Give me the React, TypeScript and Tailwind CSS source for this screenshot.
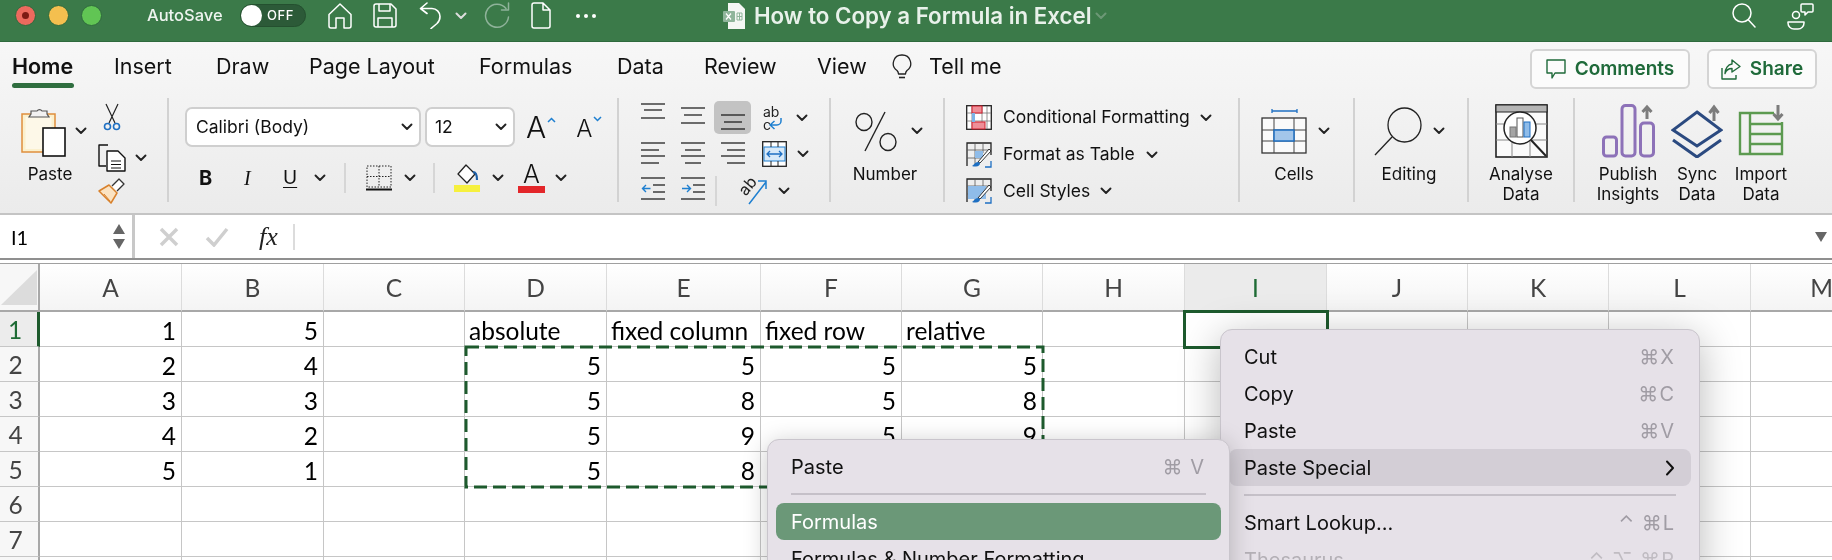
import type { ReactNode } from "react";

const ui = "font-['Inter','Liberation_Sans',sans-serif]";
const sheetFont = "font-['Lato','Liberation_Sans',sans-serif]";

function Chev({ className = "" }: { className?: string }) {
  return (
    <svg width="12" height="8" viewBox="0 0 12 8" fill="none" className={className}>
      <path d="M1.500 1.500 6 6l4.500-4.500" stroke="#222" strokeWidth="1.900" strokeLinecap="round" strokeLinejoin="round" />
    </svg>
  );
}

function HomeIcon() {
  return (
    <svg width="24" height="26" viewBox="0 0 24 26" fill="none" stroke="#fff" strokeWidth="1.500" strokeLinejoin="round">
      <path d="M1 11.500 12 1l11 10.500V23a2 2 0 0 1-2 2h-5V15H8v10H3a2 2 0 0 1-2-2z" />
    </svg>
  );
}

function SaveIcon() {
  return (
    <svg width="24" height="25" viewBox="0 0 24 25" fill="none" stroke="#fff" strokeWidth="1.500" strokeLinejoin="round">
      <path d="M3 1h15l5 5v16a2 2 0 0 1-2 2H3a2 2 0 0 1-2-2V3a2 2 0 0 1 2-2z" />
      <path d="M6 1v7h11V1M5 24v-9h14v9" />
    </svg>
  );
}

function UndoIcon() {
  return (
    <svg width="23" height="27" viewBox="0 0 23 27" fill="none" stroke="#fff" strokeWidth="1.600" strokeLinecap="round" strokeLinejoin="round">
      <path d="M8 1 1.500 6.500 8 11.500M1.500 6.500H13a8 8 0 0 1 8 8c0 3-1 5-3 7l-6 5" />
    </svg>
  );
}

function RedoIcon() {
  return (
    <svg width="26" height="27" viewBox="0 0 26 27" fill="none" stroke="#8fb39a" strokeWidth="1.500" strokeLinecap="round" strokeLinejoin="round">
      <path d="M22 6.500A11.500 11.500 0 1 0 24.500 15M24.500 1v7h-7" />
    </svg>
  );
}

function DocIcon() {
  return (
    <svg width="20" height="27" viewBox="0 0 20 27" fill="none" stroke="#fff" strokeWidth="1.500" strokeLinejoin="round">
      <path d="M3 1h9l7 7v16a2 2 0 0 1-2 2H3a2 2 0 0 1-2-2V3a2 2 0 0 1 2-2zM12 1v7h7" />
    </svg>
  );
}

function ExcelDoc() {
  return (
    <svg width="22" height="26" viewBox="0 0 22 26">
      <path d="M5 0h11l6 6v20H5z" fill="#f4f7f4" />
      <rect x="0" y="8" width="12" height="11" rx="1" fill="#8fb59b" />
      <path d="m3 10.500 5 6M8 10.500l-5 6" stroke="#fff" strokeWidth="1.200" />
      <path d="M14 10h5v7h-5zM14 13.500h5M16.500 10v7" stroke="#8fb59b" fill="none" />
    </svg>
  );
}

function SearchIcon() {
  return (
    <svg width="24" height="25" viewBox="0 0 24 25" fill="none" stroke="#fff" strokeWidth="1.500" strokeLinecap="round">
      <circle cx="10" cy="10" r="9" />
      <path d="m16.500 17 6.500 7" />
    </svg>
  );
}

function PeopleIcon() {
  return (
    <svg width="27" height="28" viewBox="0 0 27 28" fill="none" stroke="#fff" strokeWidth="1.500" strokeLinejoin="round">
      <circle cx="9" cy="13" r="3.500" />
      <path d="M1 20h16v1a6 6 0 0 1-6 6H7a6 6 0 0 1-6-6z" />
      <path d="M15 2h10a1 1 0 0 1 1 1v6a1 1 0 0 1-1 1h-4l-3 3v-3h-3a1 1 0 0 1-1-1V3a1 1 0 0 1 1-1z" />
    </svg>
  );
}

function Bulb() {
  return (
    <svg width="20" height="25" viewBox="0 0 20 25" fill="none" stroke="#222" strokeWidth="1.300" strokeLinejoin="round">
      <path d="M10 1a8.500 8.500 0 0 0-5 15.500c1 1 1.500 2 1.500 3.500h7c0-1.500.5-2.500 1.500-3.500A8.500 8.500 0 0 0 10 1z" />
      <path d="M7 23.500h6" strokeWidth="1.600" />
    </svg>
  );
}

function PasteIcon() {
  return (
    <svg width="45" height="51" viewBox="0 0 45 51" fill="none">
      <rect x="1" y="8" width="33" height="38" fill="#fbf0cd" stroke="#df8f3c" strokeWidth="1.500" />
      <rect x="4.500" y="11" width="26" height="32" fill="#fdf8e8" />
      <path d="M10 8V5h6a3 3 0 0 1 5 0h5v3l2 3H8z" fill="#f2f2f2" stroke="#555" strokeWidth="1.200" />
      <rect x="22" y="22" width="22" height="28" fill="#fff" stroke="#111" strokeWidth="1.600" />
    </svg>
  );
}

function ScissorsIcon() {
  return (
    <svg width="18" height="28" viewBox="0 0 18 28" fill="none">
      <path d="M3 1 12 20M15 1 6 20" stroke="#222" strokeWidth="1.200" />
      <circle cx="4.500" cy="23.500" r="3" stroke="#1e6fc2" strokeWidth="1.600" />
      <circle cx="13.500" cy="23.500" r="3" stroke="#1e6fc2" strokeWidth="1.600" />
    </svg>
  );
}

function CopyIcon() {
  return (
    <svg width="28" height="28" viewBox="0 0 28 28" fill="none" stroke="#111" strokeWidth="1.400" strokeLinejoin="round">
      <path d="M10 1H1v21h7" />
      <path d="M9 7h11l7 7v13H9z" fill="#fff" />
      <path d="M13 17h10M13 20.500h10M13 24h10" strokeWidth="1.100" />
    </svg>
  );
}

function BrushIcon() {
  return (
    <svg width="27" height="26" viewBox="0 0 27 26" fill="none">
      <path d="m11 7 8 8-6 10L1 13z" fill="#fbe3c2" stroke="#d8812c" strokeWidth="1.500" strokeLinejoin="round" />
      <path d="m14 8 4-4 3-3 5 5-3 3-4 4" fill="#fff" stroke="#333" strokeWidth="1.300" strokeLinejoin="round" />
      <path d="m6 16 6 7" stroke="#d8812c" />
    </svg>
  );
}

function BorderIcon() {
  return (
    <svg width="26" height="26" viewBox="0 0 26 26" fill="none">
      <path d="M1 1h24v21H1zM13 1v21M1 11.500h24" stroke="#222" strokeDasharray="1.500 1.500" />
      <path d="M0 24.500h26" stroke="#111" strokeWidth="2" />
    </svg>
  );
}

function FillIcon() {
  return (
    <svg width="26" height="28" viewBox="0 0 26 28" fill="none">
      <path d="m12 1 9 9-8 9-9-9z" fill="#fff" stroke="#222" strokeWidth="1.300" strokeLinejoin="round" />
      <path d="M19 8c3 0 4 3 4 8" stroke="#1c5fa8" strokeWidth="2.200" />
      <rect x="0" y="21" width="26" height="7" fill="#f6f03e" />
    </svg>
  );
}

function FontColorIcon() {
  return (
    <div className="flex flex-col items-center w-[27px]">
      <span className="text-[25px] font-light leading-[21px] text-[#111]">A</span>
      <span className="block w-[27px] h-[7px] mt-[1px] bg-[#e3262a]" />
    </div>
  );
}

function Lines({ rows, arrow }: { rows: number[][]; arrow?: "in" | "out" }) {
  return (
    <svg width="24" height="37" viewBox="0 0 24 37" fill="none">
      {rows.map(([x1, x2, y]) => (
        <path key={`${x1}-${y}`} d={`M${x1} ${y}H${x2}`} stroke="#111" strokeWidth="1.200" />
      ))}
      {arrow === "in" && <path d="M1 16.500h8M6 13l3.500 3.500L6 20" stroke="#1e7fd0" strokeWidth="1.400" />}
      {arrow === "out" && <path d="M1.500 16.500h8M5 13l-3.500 3.500L5 20" stroke="#1e7fd0" strokeWidth="1.400" />}
    </svg>
  );
}

function WrapIcon() {
  return (
    <div className="flex w-[24px] h-[26px] text-[14px] leading-[13px] text-[#222]">
      <div className="flex flex-col">
        <span>ab</span>
        <span>c</span>
      </div>
      <svg width="14" height="14" viewBox="0 0 14 14" fill="none" className="-ml-[10px] mt-[12px]">
        <path d="M12 1v3a4 4 0 0 1-4 4H2m3.500-4L1 8l4.500 4" stroke="#1e7fd0" strokeWidth="1.500" />
      </svg>
    </div>
  );
}

function MergeIcon() {
  return (
    <svg width="25" height="26" viewBox="0 0 25 26" fill="none">
      <rect x=".7" y=".7" width="23.600" height="24.600" fill="#fff" stroke="#222" strokeWidth="1.300" />
      <rect x="2" y="6" width="21" height="14" fill="#d8e9f8" stroke="#1e7fd0" />
      <path d="M5 13h15M8 10l-3 3 3 3M17 10l3 3-3 3" stroke="#1e6fc2" strokeWidth="1.300" />
      <path d="M9 1v5M16 1v5M9 20v5M16 20v5" stroke="#222" />
    </svg>
  );
}

function OrientIcon() {
  return (
    <div className="flex w-[30px] h-[28px]">
      <span className="text-[16px] leading-[16px] text-[#222] rotate-[-50deg] w-[18px] h-[16px] mt-[1px]">ab</span>
      <svg width="20" height="28" viewBox="0 0 20 28" fill="none" className="-ml-[8px]">
        <path d="M1 27 18 5M10 4h8v8" stroke="#1e7fd0" strokeWidth="1.500" />
      </svg>
    </div>
  );
}

function PercentIcon() {
  return (
    <svg width="43" height="41" viewBox="0 0 43 41" fill="none" stroke="#222" strokeWidth="1.400">
      <ellipse cx="9" cy="11" rx="8" ry="8.500" />
      <ellipse cx="33" cy="31" rx="8" ry="8.500" />
      <path d="M30 1 10 40" />
    </svg>
  );
}

function CondIcon() {
  return (
    <svg width="26" height="25" viewBox="0 0 26 25" fill="none">
      <rect x=".7" y=".7" width="24.600" height="23.600" fill="#fff" stroke="#222" strokeWidth="1.300" />
      <path d="M6 1v23M16 1v23M21 1v23M1 8h24M1 16h24" stroke="#777" strokeWidth=".8" />
      <rect x="6" y="1" width="10" height="7" fill="#ee8f98" stroke="#d11f2c" />
      <rect x="6" y="17" width="13" height="7" fill="#ee8f98" stroke="#d11f2c" />
      <path d="M6 8h3v9H6z" fill="#7cb4e8" />
    </svg>
  );
}

function TableIcon({ fill = false }: { fill?: boolean }) {
  return (
    <svg width="26" height="26" viewBox="0 0 26 26" fill="none">
      <path d="M1 24V1h24v12" stroke="#222" strokeWidth="1.300" />
      <path d="M1 8h24M1 16h14M9 1v22M17 1v10" stroke="#555" strokeWidth=".8" />
      {fill ? <rect x="2" y="8" width="18" height="13" fill="#8fbce9" /> : <rect x="9" y="9" width="8" height="7" fill="#8fbce9" />}
      <path d="m12 20 11-13 2 2-11 12z" fill="#fff" stroke="#333" />
      <path d="M12 20c-3 0-4 3-6 4 3 1 8 1 8-3z" fill="#1e6fc2" />
      <path d="M19 25h6v-6" stroke="#1e6fc2" strokeWidth="1.300" />
    </svg>
  );
}

function CellsIcon() {
  return (
    <svg width="46" height="46" viewBox="0 0 46 46" fill="none">
      <path d="M11 3h25M11 1v4M36 1v4" stroke="#1e6fc2" strokeWidth="1.300" />
      <rect x="1" y="10" width="44" height="35" fill="#fafafa" stroke="#333" strokeWidth="1.300" />
      <path d="M13 10v35M33 10v35M1 22h44M1 33h44" stroke="#444" strokeWidth="1" />
      <rect x="13" y="22" width="20" height="11" fill="#a3c6ea" stroke="#1e6fc2" strokeWidth="1.500" />
    </svg>
  );
}

function LensIcon() {
  return (
    <svg width="48" height="49" viewBox="0 0 48 49" fill="none" stroke="#222" strokeWidth="1.300">
      <ellipse cx="30.500" cy="18" rx="16.500" ry="17" />
      <path d="M18 30 1 48" />
    </svg>
  );
}

function AnalyseIcon() {
  return (
    <svg width="53" height="54" viewBox="0 0 53 54" fill="none">
      <rect x="1" y="1" width="51" height="52" fill="#fafafa" stroke="#222" strokeWidth="1.600" />
      <rect x="1" y="1" width="51" height="7" fill="#b5b5b5" stroke="#222" />
      <path d="M1 20h51M1 36h51M17 36v17M35 36v17" stroke="#888" />
      <circle cx="25" cy="24" r="16" fill="#fff" stroke="#222" strokeWidth="1.500" />
      <rect x="15" y="23" width="6" height="10" fill="#a5a5a5" stroke="#777" />
      <rect x="22" y="14" width="6" height="19" fill="#fff" stroke="#555" />
      <rect x="29" y="18" width="6" height="15" fill="#8fbce9" stroke="#1e6fc2" />
      <path d="m36 36 15 16" stroke="#222" strokeWidth="2" />
    </svg>
  );
}

function PublishIcon() {
  return (
    <svg width="53" height="54" viewBox="0 0 53 54" fill="none" stroke="#8d72b8" strokeWidth="3">
      <rect x="1.500" y="33" width="13" height="19" rx="3" />
      <rect x="20" y="1.500" width="13" height="50.500" rx="3.500" />
      <rect x="38.500" y="19" width="13" height="33" rx="3.500" />
      <path d="M45 15V3m-4.500 5L45 3l4.500 5" stroke="#7c7c7c" />
    </svg>
  );
}

function SyncIcon() {
  return (
    <svg width="52" height="54" viewBox="0 0 52 54" fill="none" stroke="#2b4a80" strokeWidth="3">
      <path d="M26 8 50 26 26 42 2 26z" />
      <path d="m2 36 24 17 24-17" />
      <path d="M43 17V3m-4.500 6L43 3l4.500 6" stroke="#7c7c7c" />
    </svg>
  );
}

function ImportIcon() {
  return (
    <svg width="46" height="54" viewBox="0 0 46 54" fill="none" stroke="#5c9a50" strokeWidth="2.400">
      <path d="M36 9H2v41h42V18" />
      <path d="M12 9v41M12 20h32M12 30h32M12 40h32" />
      <path d="M40 1v14m-4.500-5 4.500 5 4.500-5" stroke="#7c7c7c" strokeWidth="3" />
    </svg>
  );
}

function Label({ children, width }: { children: ReactNode; width: string }) {
  return <div className={`${width} text-center text-[17px] leading-[20px] text-[#111] whitespace-nowrap`}>{children}</div>;
}

const tabs = [
  { name: "Home", w: "w-[60px]", active: true },
  { name: "Insert", w: "w-[60px]" },
  { name: "Draw", w: "w-[51px]" },
  { name: "Page Layout", w: "w-[128px]" },
  { name: "Formulas", w: "w-[96px]" },
  { name: "Data", w: "w-[45px]" },
  { name: "Review", w: "w-[71px]" },
  { name: "View", w: "w-[38px]" },
];

const cols = ["A", "B", "C", "D", "E", "F", "G", "H", "I", "J", "K", "L", "M"];

const rows: Record<string, string[]> = {
  A: ["1", "2", "3", "4", "5"],
  B: ["5", "4", "3", "2", "1"],
  D: ["absolute", "5", "5", "5", "5"],
  E: ["fixed column", "5", "8", "9", "8"],
  F: ["fixed row", "5", "5", "5"],
  G: ["relative", "5", "8", "9"],
};

function Sheet() {
  return (
    <div className={`relative flex-1 ${sheetFont}`}>
      <div className="grid grid-cols-[40px_142px_142px_141px_142px_154px_141px_141px_142px_142px_141px_141px_142px_142px] grid-rows-[48px_repeat(8,35px)]">
        <div className="flex items-end justify-start pl-[1px] pb-[5px] bg-[#f7f7f7] border-r-2 border-b-2 border-r-[#a8a8a8] border-b-[#a8a8a8]">
          <svg width="36" height="35" viewBox="0 0 36 35">
            <path d="M36 0v35H0z" fill="#dcdcdc" />
          </svg>
        </div>
        {cols.map((c) => (
          <div
            key={c}
            className={`flex items-center justify-center pt-[2px] text-[24.500px] border-b-2 border-b-[#a8a8a8] border-r border-r-[#dcdcdc] ${
              c === "I" ? "bg-[#ebebeb] text-[#1e6b35]" : "bg-gradient-to-b from-white to-[#f4f4f4] text-[#444]"
            }`}
          >
            {c}
          </div>
        ))}
        {[1, 2, 3, 4, 5, 6, 7, 8].map((n) => (
          <Row key={n} n={n} />
        ))}
      </div>
      <svg width="581" height="144" viewBox="0 0 581 144" fill="none" className="absolute left-[464px] top-[81px]">
        <rect x="2" y="2" width="577" height="140" stroke="#1d5a2d" strokeWidth="3" strokeDasharray="13 6" />
      </svg>
      <div className="absolute left-[1183px] top-[46px] w-[146px] h-[39px] border-[3px] border-[#1d5a2d]" />
    </div>
  );
}

function Row({ n }: { n: number }) {
  return (
    <>
      <div
        className={`flex items-center justify-center pr-[7px] pt-[3px] text-[24.500px] border-b border-b-[#c6c6c6] ${
          n === 1 ? "bg-[#ececec] text-[#1e6b35] border-r-[3px] border-r-[#1d5a2d]" : "bg-[#f7f7f7] text-[#444] border-r-2 border-r-[#a8a8a8]"
        }`}
      >
        {n < 8 ? n : ""}
      </div>
      {cols.map((c) => {
        const value = rows[c]?.[n - 1] ?? "";
        const isNumber = /^\d+$/.test(value);
        return (
          <div
            key={c}
            className={`flex items-center pt-[5px] text-[24.500px] leading-none text-black whitespace-nowrap border-b border-r border-[#c6c6c6] ${
              isNumber ? "justify-end pr-[5px]" : "justify-start pl-[4px]"
            }`}
          >
            {value}
          </div>
        );
      })}
    </>
  );
}

function MenuItem({ label, keys, active, disabled, green }: { label: string; keys?: string; active?: boolean; disabled?: boolean; green?: boolean }) {
  const bg = active ? "bg-[#d3ced6]" : green ? "bg-[#6b9878]" : "";
  const color = disabled ? "text-[#b4b0b6]" : green ? "text-white" : "text-[#111]";
  return (
    <div className={`flex items-center justify-between h-[37px] mx-[8px] pl-[15px] pr-[16px] rounded-[8px] whitespace-nowrap ${bg}`}>
      <span className={`text-[20px] ${color}`}>{label}</span>
      {keys && <span className={`text-[20px] tracking-[1px] ${disabled ? "text-[#c0bcc2]" : "text-[#a09ca4]"}`}>{keys}</span>}
      {active && (
        <svg width="10" height="16" viewBox="0 0 10 16" fill="none">
          <path d="m2 1.500 6 6.500-6 6.500" stroke="#111" strokeWidth="2" strokeLinecap="round" strokeLinejoin="round" />
        </svg>
      )}
    </div>
  );
}

function MenuRule() {
  return (
    <div className="h-[18px] flex items-center mx-[23px]">
      <div className="w-full h-[1.500px] bg-[#c5c0c8]" />
    </div>
  );
}

export default function App() {
  return (
    <div className={`relative w-[1832px] h-[560px] overflow-hidden flex flex-col bg-white blur-[0.4px] ${ui}`}>
      <header className="h-[42px] shrink-0 bg-[#3b7a49] border-b border-[#2f6a3d]">
        <div className="flex items-center h-[31px] pl-[15px] text-white">
          <span className="flex items-center justify-center w-[21px] h-[21px] rounded-full bg-[#ec6a5e] border border-[#2f6a3d]">
            <span className="w-[7px] h-[7px] rounded-full bg-[#7d1a14]" />
          </span>
          <span className="w-[21px] h-[21px] ml-[12px] rounded-full bg-[#f4bf4f] border border-[#2f6a3d]" />
          <span className="w-[21px] h-[21px] ml-[12px] rounded-full bg-[#61c554] border border-[#2f6a3d]" />
          <span className="w-[83px] ml-[45px] text-[16.500px] font-medium whitespace-nowrap text-[#eef4ef]">AutoSave</span>
          <div className="flex items-center w-[66px] h-[23px] ml-[10px] rounded-full bg-[#2c5a38] border border-[#24502f]">
            <span className="w-[21px] h-[21px] rounded-full bg-white" />
            <span className="ml-[5px] text-[13px] font-medium tracking-[0.5px]">OFF</span>
          </div>
          <span className="ml-[22px]"><HomeIcon /></span>
          <span className="ml-[21px]"><SaveIcon /></span>
          <span className="ml-[22px]"><UndoIcon /></span>
          <span className="ml-[13px] invert"><Chev /></span>
          <span className="ml-[17px]"><RedoIcon /></span>
          <span className="ml-[21px]"><DocIcon /></span>
          <span className="flex gap-[4px] ml-[25px]">
            <i className="w-[4px] h-[4px] rounded-full bg-white" />
            <i className="w-[4px] h-[4px] rounded-full bg-white" />
            <i className="w-[4px] h-[4px] rounded-full bg-white" />
          </span>
          <span className="ml-[127px]"><ExcelDoc /></span>
          <span className="w-[334px] ml-[9px] text-[22.300px] font-semibold whitespace-nowrap text-[#e8f1ea]">How to Copy a Formula in Excel</span>
          <span className="ml-[7px] opacity-30 invert"><Chev /></span>
          <span className="ml-[625px]"><SearchIcon /></span>
          <span className="ml-[31px]"><PeopleIcon /></span>
        </div>
      </header>

      <section className="h-[173px] shrink-0 bg-gradient-to-b from-[#f7f7f7] to-[#ebebeb] border-b-2 border-[#c4c4c4] text-[#111]">
        <div className="flex items-start h-[56px] pl-[12px]">
          <nav className="flex gap-[42px] pt-[11px] text-[21.500px] leading-[26px]">
            {tabs.map((t) => (
              <div key={t.name} className={`${t.w} flex flex-col whitespace-nowrap ${t.active ? "font-semibold" : ""}`}>
                {t.name}
                {t.active && <span className="w-[62px] h-[5px] mt-[4px] rounded-full bg-[#2f6e3f]" />}
              </div>
            ))}
          </nav>
          <div className="flex items-center h-[26px] mt-[11px] ml-[37px] text-[21.500px]">
            <Bulb />
            <span className="ml-[17px] whitespace-nowrap">Tell me</span>
          </div>
          <div className="flex gap-[17px] ml-auto mt-[7px] mr-[15px] text-[19px] font-semibold text-[#1f6a3a]">
            <button className="flex items-center justify-center gap-[9px] w-[160px] h-[40px] rounded-[6px] border-2 border-[#d4d4d4] bg-[#fbfbfb]">
              <svg width="20" height="20" viewBox="0 0 20 20" fill="none" stroke="#1f6a3a" strokeWidth="1.400" strokeLinejoin="round">
                <path d="M1 1h18v13H9l-3 5v-5H1z" />
              </svg>
              Comments
            </button>
            <button className="flex items-center justify-center gap-[9px] w-[110px] h-[40px] rounded-[6px] border-2 border-[#d4d4d4] bg-[#fbfbfb]">
              <svg width="20" height="21" viewBox="0 0 20 21" fill="none" stroke="#1f6a3a" strokeWidth="1.400" strokeLinejoin="round">
                <path d="M1 9v11h14v-4M11 1l8 6.500-8 5.500V9.500c-4 0-6 2-7 5 0-5 3-9 7-9.500z" />
              </svg>
              Share
            </button>
          </div>
        </div>

        <div className="flex h-[104px]">
          {/* clipboard */}
          <div className="flex w-[167px] pl-[2px]">
            <div className="w-[96px]">
              <div className="flex items-center h-[66px] pl-[19px]">
                <PasteIcon />
                <Chev className="ml-[9px]" />
              </div>
              <Label width="w-[96px]">Paste</Label>
            </div>
            <div className="flex flex-col pt-[5px]">
              <span className="h-[37px] pl-[5px]"><ScissorsIcon /></span>
              <span className="flex items-center h-[37px]">
                <CopyIcon />
                <Chev className="ml-[9px]" />
              </span>
              <span className="h-[26px] pt-[2px]"><BrushIcon /></span>
            </div>
          </div>

          {/* font */}
          <div className="w-[450px] pl-[16px] pt-[9px] border-l-2 border-[#d2d2d2]">
            <div className="flex items-center">
              <div className="flex items-center justify-between w-[236px] h-[40px] pl-[9px] pr-[6px] rounded-[7px] border-2 border-[#cfcfcf] bg-white text-[17.500px]">
                Calibri (Body)
                <Chev />
              </div>
              <div className="flex items-center justify-between w-[90px] h-[40px] ml-[4px] pl-[8px] pr-[6px] rounded-[7px] border-2 border-[#cfcfcf] bg-white text-[17.500px]">
                12
                <Chev />
              </div>
              <div className="flex items-start ml-[11px]">
                <span className="text-[30px] font-light leading-[34px]">A</span>
                <svg width="9" height="6" viewBox="0 0 9 6" fill="none" className="mt-[7px] ml-[1px]"><path d="m1 5 3.500-3.500L8 5" stroke="#1e7fd0" strokeWidth="1.500" /></svg>
              </div>
              <div className="flex items-start ml-[20px] pt-[3px]">
                <span className="text-[24px] font-light leading-[34px]">A</span>
                <svg width="9" height="6" viewBox="0 0 9 6" fill="none" className="mt-[4px] ml-[1px]"><path d="m1 1 3.500 3.500L8 1" stroke="#1e7fd0" strokeWidth="1.500" /></svg>
              </div>
            </div>
            <div className="flex items-center h-[28px] mt-[17px]">
              <span className="w-[12px] ml-[14px] text-[20px] font-bold">B</span>
              <span className="w-[8px] ml-[33px] text-[20px] font-['Liberation_Serif',serif] italic">I</span>
              <span className="w-[14px] ml-[31px] text-[19px] underline underline-offset-[3px]">U</span>
              <Chev className="ml-[17px]" />
              <span className="w-[2px] h-[30px] ml-[18px] bg-[#d6d6d6]" />
              <span className="ml-[20px]"><BorderIcon /></span>
              <Chev className="ml-[12px]" />
              <span className="w-[2px] h-[30px] ml-[17px] bg-[#d6d6d6]" />
              <span className="ml-[19px]"><FillIcon /></span>
              <Chev className="ml-[12px]" />
              <span className="ml-[14px]"><FontColorIcon /></span>
              <Chev className="ml-[10px]" />
            </div>
          </div>

          {/* alignment */}
          <div className="w-[212px] pl-[22px] border-l-2 border-[#d2d2d2]">
            <div className="grid grid-cols-[40px_40px_40px_60px] grid-rows-[37px_37px_37px] h-[104px] items-center justify-items-start">
              <Lines rows={[[0, 24, 6], [3, 21, 12], [0, 24, 20]]} />
              <Lines rows={[[0, 24, 10], [3, 21, 17], [0, 24, 25]]} />
              <div className="flex items-center justify-center w-[37px] h-[33px] -ml-[7px] mt-[2px] rounded-[5px] bg-[#c3c3c3]">
                <Lines rows={[[0, 24, 16], [3, 21, 23], [0, 24, 30]]} />
              </div>
              <div className="flex items-center gap-[6px] pl-[2px] pt-[3px]"><WrapIcon /><Chev className="ml-[3px]" /></div>
              <Lines rows={[[0, 24, 8], [0, 18, 15], [0, 24, 21], [0, 18, 28]]} />
              <Lines rows={[[0, 24, 8], [4, 20, 15], [0, 24, 21], [4, 20, 28]]} />
              <Lines rows={[[0, 24, 8], [6, 24, 15], [0, 24, 21], [6, 24, 28]]} />
              <div className="flex items-center gap-[6px] pl-[1px]"><MergeIcon /><Chev className="ml-[4px]" /></div>
              <Lines arrow="out" rows={[[0, 24, 6], [12, 24, 13], [12, 24, 20], [0, 24, 27]]} />
              <Lines arrow="in" rows={[[0, 24, 6], [12, 24, 13], [12, 24, 20], [0, 24, 27]]} />
              <div className="flex items-center col-span-2">
                <span className="w-[2px] h-[30px] -ml-[6px] bg-[#d6d6d6]" />
                <span className="ml-[21px]"><OrientIcon /></span>
                <Chev className="ml-[10px]" />
              </div>
            </div>
          </div>

          {/* number */}
          <div className="w-[114px] border-l-2 border-[#d2d2d2]">
            <div className="flex items-center h-[66px] pl-[24px]">
              <PercentIcon />
              <Chev className="ml-[13px]" />
            </div>
            <Label width="w-[108px]">Number</Label>
          </div>

          {/* styles */}
          <div className="w-[295px] pl-[21px] border-l-2 border-[#d2d2d2] text-[17.500px]">
            <div className="flex items-center h-[37px] mt-[1px]"><CondIcon /><span className="ml-[11px] whitespace-nowrap">Conditional Formatting</span><Chev className="ml-[10px]" /></div>
            <div className="flex items-center h-[37px]"><TableIcon /><span className="ml-[11px] whitespace-nowrap">Format as Table</span><Chev className="ml-[11px]" /></div>
            <div className="flex items-center h-[36px]"><TableIcon fill /><span className="ml-[11px] whitespace-nowrap">Cell Styles</span><Chev className="ml-[10px]" /></div>
          </div>

          {/* cells */}
          <div className="w-[115px] border-l-2 border-[#d2d2d2]">
            <div className="flex items-center h-[66px] pl-[21px]">
              <CellsIcon />
              <Chev className="ml-[11px]" />
            </div>
            <Label width="w-[108px]">Cells</Label>
          </div>

          {/* editing */}
          <div className="w-[114px] border-l-2 border-[#d2d2d2]">
            <div className="flex items-center h-[66px] pl-[19px]">
              <LensIcon />
              <Chev className="ml-[11px]" />
            </div>
            <Label width="w-[108px]">Editing</Label>
          </div>

          {/* analyse */}
          <div className="w-[106px] border-l-2 border-[#d2d2d2]">
            <div className="flex items-center justify-center h-[66px] w-[104px]">
              <AnalyseIcon />
            </div>
            <Label width="w-[104px]">Analyse<br />Data</Label>
          </div>

          {/* add-ins */}
          <div className="flex pl-[18px] border-l-2 border-[#d2d2d2]">
            <div className="w-[70px]">
              <div className="flex items-center justify-center h-[66px]"><PublishIcon /></div>
              <Label width="w-[70px]">Publish<br />Insights</Label>
            </div>
            <div className="w-[68px]">
              <div className="flex items-center justify-center h-[66px]"><SyncIcon /></div>
              <Label width="w-[68px]">Sync<br />Data</Label>
            </div>
            <div className="w-[60px]">
              <div className="flex items-center justify-center h-[66px]"><ImportIcon /></div>
              <Label width="w-[60px]">Import<br />Data</Label>
            </div>
          </div>
        </div>
      </section>

      <div className="flex items-center h-[45px] shrink-0 border-b-2 border-[#8f8f8f]">
        <div className={`flex items-center justify-between w-[135px] h-full pl-[11px] pr-[7px] border-r-[3px] border-[#c8c8c8] text-[20px] ${sheetFont}`}>
          I1
          <div className="flex flex-col gap-[5px]">
            <svg width="12" height="10" viewBox="0 0 12 10"><path d="M6 0l6 10H0z" fill="#666" /></svg>
            <svg width="12" height="10" viewBox="0 0 12 10"><path d="M6 10 0 0h12z" fill="#666" /></svg>
          </div>
        </div>
        <svg width="20" height="20" viewBox="0 0 20 20" fill="none" className="ml-[24px]">
          <path d="m2 2 16 16M18 2 2 18" stroke="#cfcfcf" strokeWidth="3.500" />
        </svg>
        <svg width="24" height="20" viewBox="0 0 24 20" fill="none" className="ml-[26px]">
          <path d="m2 11 7 7L22 2" stroke="#cfcfcf" strokeWidth="3.500" />
        </svg>
        <span className="ml-[30px] w-[26px] font-['Liberation_Serif',serif] italic text-[26px] text-[#222]">fx</span>
        <span className="w-[2px] h-[26px] ml-[8px] bg-[#dcdcdc]" />
        <svg width="12" height="10" viewBox="0 0 12 10" className="ml-auto mr-[5px]"><path d="M6 10 0 0h12z" fill="#666" /></svg>
      </div>
      <div className="h-[3px] shrink-0 bg-white" />
      <div className="h-[1px] shrink-0 bg-[#a0a0a0]" />

      <Sheet />

      {/* right click menu */}
      <div className="absolute left-[1220px] top-[329px] w-[480px] h-[260px] pt-[8px] rounded-[12px] border border-[#c9c5cc] bg-[#e6e1e8] shadow-[0_8px_40px_rgba(0,0,0,0.28)]">
        <MenuItem label="Cut" keys="⌘X" />
        <MenuItem label="Copy" keys="⌘C" />
        <MenuItem label="Paste" keys="⌘V" />
        <MenuItem label="Paste Special" active />
        <MenuRule />
        <MenuItem label="Smart Lookup..." keys="⌃ ⌘L" />
        <MenuItem label="Thesaurus" keys="⌃ ⌥ ⌘R" disabled />
      </div>

      {/* paste special submenu */}
      <div className="absolute left-[767px] top-[439px] w-[463px] h-[150px] pt-[8px] rounded-[12px] border border-[#c9c5cc] bg-[#e6e1e8] shadow-[0_4px_24px_rgba(0,0,0,0.22)]">
        <MenuItem label="Paste" keys="⌘ V" />
        <MenuRule />
        <MenuItem label="Formulas" green />
        <MenuItem label="Formulas & Number Formatting" />
      </div>
    </div>
  );
}
